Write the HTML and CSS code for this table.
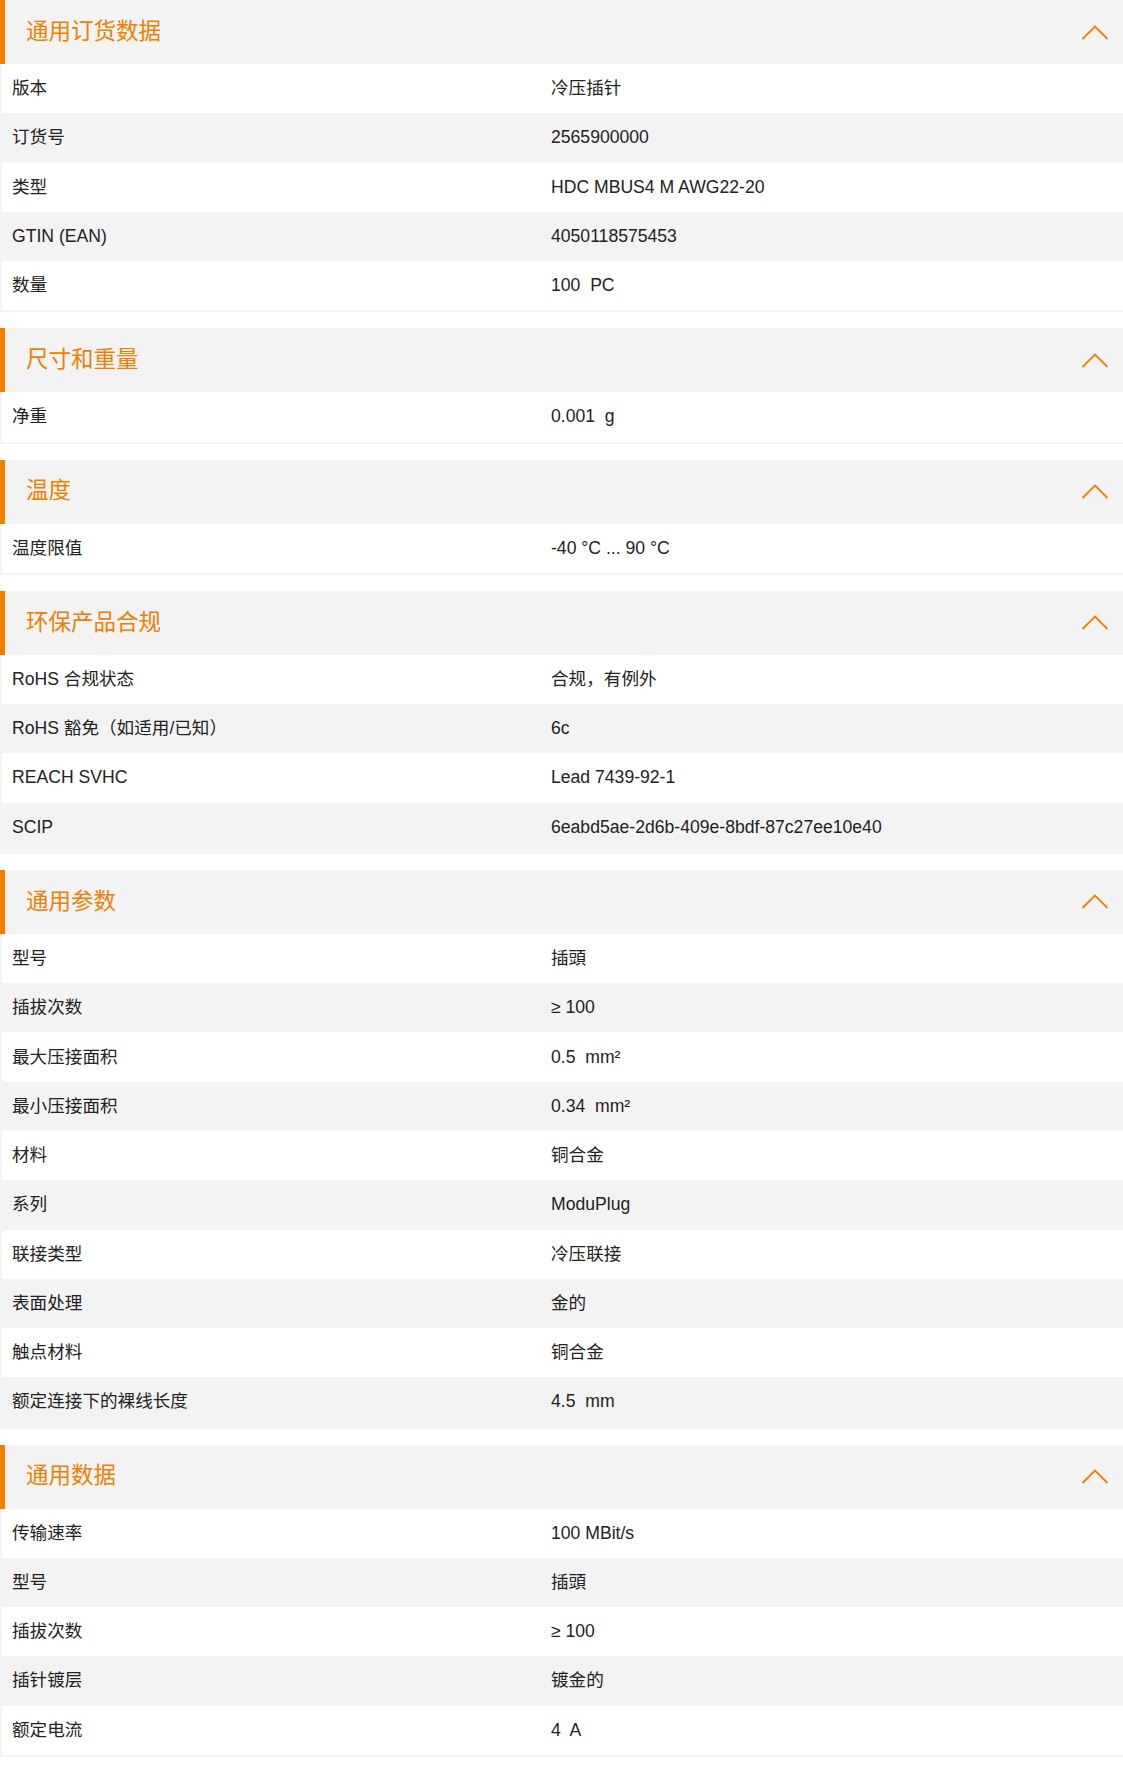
FILE: index.html
```html
<!DOCTYPE html>
<html lang="zh-CN">
<head>
<meta charset="utf-8">
<title>产品数据</title>
<link rel="stylesheet" href="styles.css">
</head>
<body>
<div class="page">

  <section class="section">
    <div class="section-head">
      <h2 class="title">通用订货数据</h2>
      <svg class="chevron" width="28" height="15" viewBox="0 0 28 15"><polyline points="1.5,14 14,1.5 26.5,14"/></svg>
    </div>
    <div class="rows">
      <div class="row"><span class="label">版本</span><span class="value">冷压插针</span></div>
      <div class="row"><span class="label">订货号</span><span class="value">2565900000</span></div>
      <div class="row"><span class="label">类型</span><span class="value">HDC MBUS4 M AWG22-20</span></div>
      <div class="row"><span class="label">GTIN (EAN)</span><span class="value">4050118575453</span></div>
      <div class="row"><span class="label">数量</span><span class="value">100&nbsp; PC</span></div>
    </div>
  </section>

  <section class="section">
    <div class="section-head">
      <h2 class="title">尺寸和重量</h2>
      <svg class="chevron" width="28" height="15" viewBox="0 0 28 15"><polyline points="1.5,14 14,1.5 26.5,14"/></svg>
    </div>
    <div class="rows">
      <div class="row"><span class="label">净重</span><span class="value">0.001&nbsp; g</span></div>
    </div>
  </section>

  <section class="section">
    <div class="section-head">
      <h2 class="title">温度</h2>
      <svg class="chevron" width="28" height="15" viewBox="0 0 28 15"><polyline points="1.5,14 14,1.5 26.5,14"/></svg>
    </div>
    <div class="rows">
      <div class="row"><span class="label">温度限值</span><span class="value">-40 °C ... 90 °C</span></div>
    </div>
  </section>

  <section class="section">
    <div class="section-head">
      <h2 class="title">环保产品合规</h2>
      <svg class="chevron" width="28" height="15" viewBox="0 0 28 15"><polyline points="1.5,14 14,1.5 26.5,14"/></svg>
    </div>
    <div class="rows">
      <div class="row"><span class="label">RoHS 合规状态</span><span class="value">合规，有例外</span></div>
      <div class="row"><span class="label">RoHS 豁免（如适用/已知）</span><span class="value">6c</span></div>
      <div class="row"><span class="label">REACH SVHC</span><span class="value">Lead 7439-92-1</span></div>
      <div class="row"><span class="label">SCIP</span><span class="value">6eabd5ae-2d6b-409e-8bdf-87c27ee10e40</span></div>
    </div>
  </section>

  <section class="section">
    <div class="section-head">
      <h2 class="title">通用参数</h2>
      <svg class="chevron" width="28" height="15" viewBox="0 0 28 15"><polyline points="1.5,14 14,1.5 26.5,14"/></svg>
    </div>
    <div class="rows">
      <div class="row"><span class="label">型号</span><span class="value">插頭</span></div>
      <div class="row"><span class="label">插拔次数</span><span class="value">≥ 100</span></div>
      <div class="row"><span class="label">最大压接面积</span><span class="value">0.5&nbsp; mm²</span></div>
      <div class="row"><span class="label">最小压接面积</span><span class="value">0.34&nbsp; mm²</span></div>
      <div class="row"><span class="label">材料</span><span class="value">铜合金</span></div>
      <div class="row"><span class="label">系列</span><span class="value">ModuPlug</span></div>
      <div class="row"><span class="label">联接类型</span><span class="value">冷压联接</span></div>
      <div class="row"><span class="label">表面处理</span><span class="value">金的</span></div>
      <div class="row"><span class="label">触点材料</span><span class="value">铜合金</span></div>
      <div class="row"><span class="label">额定连接下的裸线长度</span><span class="value">4.5&nbsp; mm</span></div>
    </div>
  </section>

  <section class="section">
    <div class="section-head">
      <h2 class="title">通用数据</h2>
      <svg class="chevron" width="28" height="15" viewBox="0 0 28 15"><polyline points="1.5,14 14,1.5 26.5,14"/></svg>
    </div>
    <div class="rows">
      <div class="row"><span class="label">传输速率</span><span class="value">100 MBit/s</span></div>
      <div class="row"><span class="label">型号</span><span class="value">插頭</span></div>
      <div class="row"><span class="label">插拔次数</span><span class="value">≥ 100</span></div>
      <div class="row"><span class="label">插针镀层</span><span class="value">镀金的</span></div>
      <div class="row"><span class="label">额定电流</span><span class="value">4&nbsp; A</span></div>
    </div>
  </section>

</div>
</body>
</html>
```

FILE: styles.css
```css
html, body {
  margin: 0;
  padding: 0;
  background: #ffffff;
}

body {
  font-family: "Liberation Sans", "Noto Sans CJK SC", sans-serif;
  font-size: 17.6px;
  color: #222222;
}

.page {
  display: flex;
  flex-direction: column;
  gap: 16px;
}

.section-head {
  height: 64px;
  box-sizing: border-box;
  background: #f3f3f3;
  border-left: 5px solid #ee7f00;
  display: flex;
  align-items: center;
  justify-content: space-between;
  padding: 0 14px 0 21px;
}

.title {
  margin: 0;
  font-size: 22.5px;
  font-weight: normal;
  color: #ee7f00;
  line-height: 1;
}

.chevron {
  display: block;
  fill: none;
  stroke: #ee7f00;
  stroke-width: 1.8;
}

.rows {
  border-left: 2px solid #f3f3f3;
  border-bottom: 2px solid #f3f3f3;
}

.row {
  display: grid;
  grid-template-columns: 539px 1fr;
  align-items: center;
  height: 49.27px;
  padding-left: 10px;
  background: #ffffff;
}

.row:nth-child(even) {
  background: #f3f3f3;
}

.label,
.value {
  line-height: 1.2;
}
```
